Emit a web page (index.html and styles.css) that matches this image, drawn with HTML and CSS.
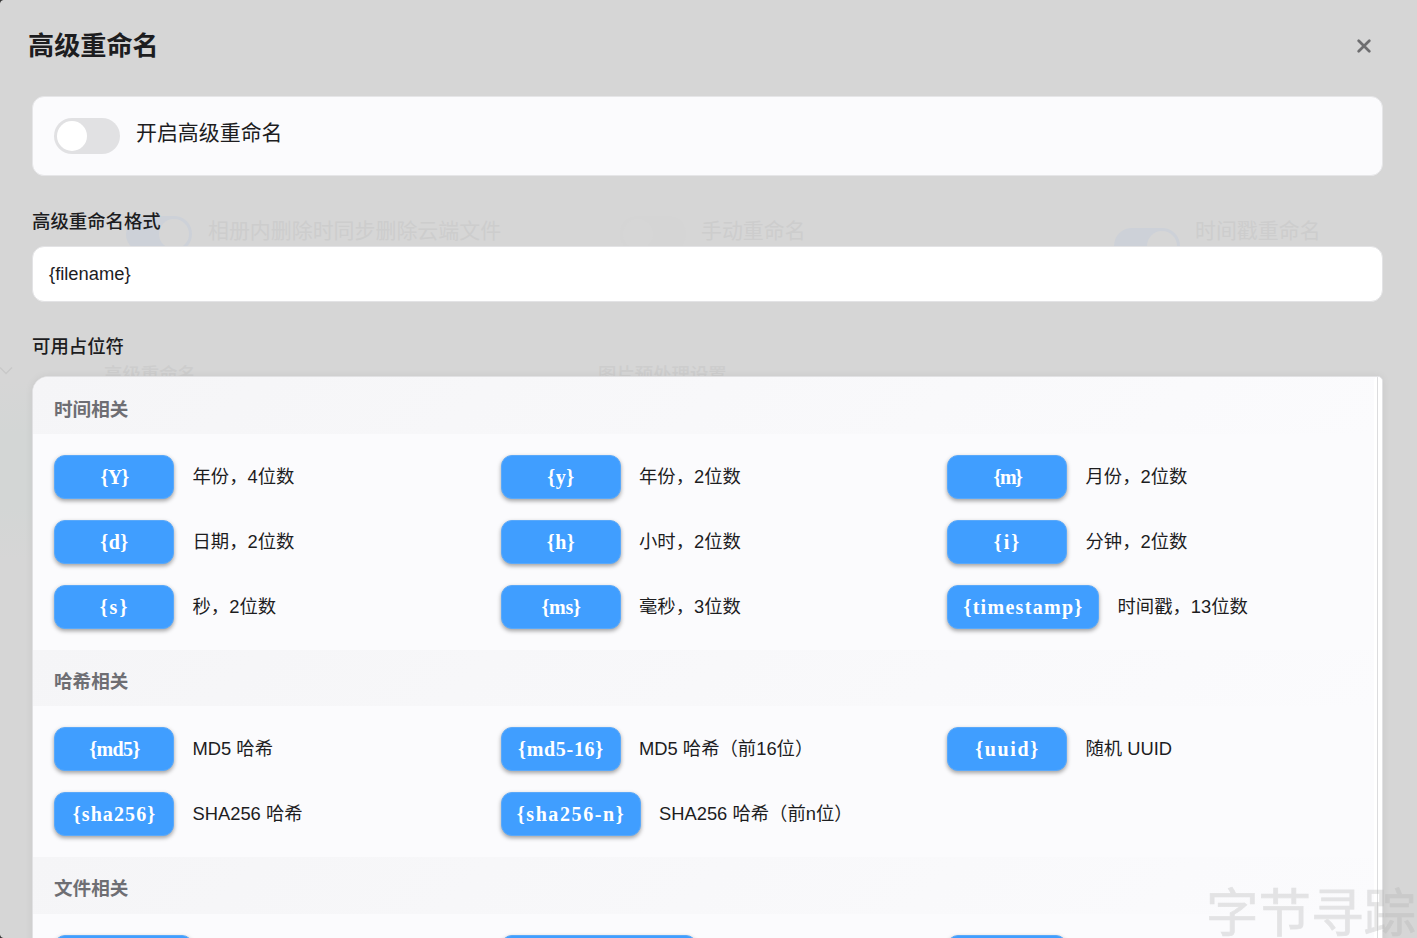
FILE: index.html
```
<!DOCTYPE html>
<html lang="zh-CN">
<head>
<meta charset="utf-8">
<title>高级重命名</title>
<link rel="stylesheet" href="styles.css">
</head>
<body>
<div class="behind" aria-hidden="true">
  <i class="ghost-side"></i>
  <i class="ghost-toggle on g1"></i><span class="ghost-text g2">相册内删除时同步删除云端文件</span>
  <i class="ghost-toggle g3"></i><span class="ghost-text g4">手动重命名</span>
  <i class="ghost-toggle on g5"></i><span class="ghost-text g6">时间戳重命名</span>
  <span class="ghost-text small g7">高级重命名</span>
  <span class="ghost-text small g8">图片预处理设置</span>
  <svg class="ghost-chevron" width="16" height="10" viewBox="0 0 16 10"><path d="M1 1.5 7 7.500 13 1.500"/></svg>
</div>
<main class="dialog">
  <header class="dialog-head">
    <h1>高级重命名</h1>
    <button class="close" aria-label="关闭"><svg width="14" height="14" viewBox="0 0 14 14"><path d="M1.700 1.700 12.300 12.300M12.300 1.700 1.700 12.300"/></svg></button>
  </header>
  <section class="switch-card"><span class="toggle"></span><span class="switch-label">开启高级重命名</span></section>
  <label class="field-label">高级重命名格式</label>
  <div class="input">{filename}</div>
  <div class="field-label second">可用占位符</div>
  <section class="panel">
    <div class="list">
      <h2 class="first">时间相关</h2>
      <div class="grid">
        <div class="item"><code class="tag sy">{Y}</code><span>年份，4位数</span></div>
        <div class="item"><code class="tag s3">{y}</code><span>年份，2位数</span></div>
        <div class="item"><code class="tag sm">{m}</code><span>月份，2位数</span></div>
        <div class="item"><code class="tag s3">{d}</code><span>日期，2位数</span></div>
        <div class="item"><code class="tag s3">{h}</code><span>小时，2位数</span></div>
        <div class="item"><code class="tag si">{i}</code><span>分钟，2位数</span></div>
        <div class="item"><code class="tag si">{s}</code><span>秒，2位数</span></div>
        <div class="item"><code class="tag sms">{ms}</code><span>毫秒，3位数</span></div>
        <div class="item"><code class="tag sts">{timestamp}</code><span>时间戳，13位数</span></div>
      </div>
      <h2>哈希相关</h2>
      <div class="grid">
        <div class="item"><code class="tag smd">{md5}</code><span>MD5 哈希</span></div>
        <div class="item"><code class="tag smd16">{md5-16}</code><span>MD5 哈希（前16位）</span></div>
        <div class="item"><code class="tag suu">{uuid}</code><span>随机 UUID</span></div>
        <div class="item"><code class="tag ssha">{sha256}</code><span>SHA256 哈希</span></div>
        <div class="item"><code class="tag sshan">{sha256-n}</code><span>SHA256 哈希（前n位）</span></div>
      </div>
      <h2 class="tall">文件相关</h2>
      <div class="grid">
        <div class="item"><code class="tag w1"></code></div>
        <div class="item"><code class="tag w2"></code></div>
        <div class="item"><code class="tag"></code></div>
      </div>
    </div>
    <div class="scrollbar"></div>
  </section>
</main>
<div class="watermark">字节寻踪</div>
</body>
</html>
```
FILE: styles.css
```
* { box-sizing: border-box; }
html, body { height: 100%; }
body {
  margin: 0;
  position: relative;
  overflow: hidden;
  background: #d6d6d6;
  color: #1d1d1f;
  font-family: "Liberation Sans", "Noto Sans CJK SC", sans-serif;
  font-size: 18.350px;
}
body::before, body::after {
  content: "";
  position: absolute;
  left: 0;
  width: 4px;
  height: 4px;
}
body::before { top: 0; background: radial-gradient(circle at 4px 4px, transparent 3.5px, #333 4.5px); }
body::after { bottom: 0; background: radial-gradient(circle at 4px 0, transparent 3.5px, #333 4.5px); }

.behind { position: absolute; inset: 0; overflow: hidden; }
.ghost-text { position: absolute; font-size: 20.950px; line-height: 30px; color: #cdcdcd; white-space: nowrap; }
.ghost-text.small { font-size: 18.400px; font-weight: 500; }
.ghost-side { position: absolute; left: 0; top: 380px; width: 32px; height: 180px; background: linear-gradient(#d6d6d6, #d3d6d5 30%, #d3d6d5 70%, #d6d6d6); }
.ghost-toggle { position: absolute; width: 66px; height: 36px; border-radius: 18px; background: #d5d5d5; }
.ghost-toggle::after { content: ""; position: absolute; left: 3px; top: 3px; width: 30px; height: 30px; border-radius: 50%; background: #d6d6d6; }
.ghost-toggle.on { background: #cdd1d8; }
.ghost-toggle.on::after { left: 33px; }
.g1 { left: 126px; top: 216px; }
.g2 { left: 208px; top: 216px; }
.g3 { left: 620px; top: 216px; }
.g4 { left: 701px; top: 216px; }
.g5 { left: 1114px; top: 228px; }
.g6 { left: 1195px; top: 216px; }
.g7 { left: 104px; top: 360px; }
.g8 { left: 598px; top: 360px; }
.ghost-chevron { position: absolute; left: -1px; top: 366px; fill: none; stroke: #c9c9c9; stroke-width: 1.500; }

.dialog { position: relative; height: 938px; padding: 0 34.500px 0 32px; overflow: hidden; display: flex; flex-direction: column; }
.dialog-head { display: flex; flex: none; justify-content: space-between; align-items: center; height: 96px; padding: 0 12px 4px 0; margin-left: -4px; }
h1 { margin: 0; font-size: 26.150px; line-height: 36px; font-weight: 700; }
.close { display: flex; padding: 0; border: 0; background: none; }
.close svg { fill: none; stroke: #6e6e70; stroke-width: 2.700; stroke-linecap: round; }

.switch-card { flex: none; display: flex; align-items: center; gap: 16px; height: 80px; padding: 0 21px; border: 1px solid #e6e6e8; border-radius: 12px; background: #fbfbfd; }
.toggle { width: 66px; height: 36px; padding: 3px; border-radius: 18px; background: #e1e1e3; }
.toggle::after { content: ""; display: block; width: 30px; height: 30px; border-radius: 50%; background: #fff; }
.switch-label { font-size: 20.950px; line-height: 30px; padding-bottom: 6px; }
.field-label { flex: none; display: block; margin-top: 32px; height: 38px; line-height: 27px; font-size: 18.400px; font-weight: 500; }
.input { flex: none; height: 56px; padding: 0 16px; border: 1px solid #e3e3e5; border-radius: 12px; background: #fff; line-height: 54px; }
.field-label.second { margin-top: 31px; height: 43px; }

.panel { flex: none; display: flex; height: 640px; border: 1px solid #e1e1e3; border-radius: 16px 5px 0 0; background: #fbfbfd; overflow: hidden; box-shadow: 0 0 8px rgba(0, 0, 0, .06); }
.list { flex: 1; margin-right: -5px; }
.scrollbar { width: 8px; border-radius: 4px; position: relative; background: linear-gradient(90deg, #fff 3px, #dcdcde 3px, #dcdcde 4px, #fff 4px); }
h2 { margin: 0; height: 56px; padding: 0 21px; line-height: 63px; font-size: 18.600px; font-weight: 700; color: #6e6e73; background: linear-gradient(135deg, #f5f5f7, #fbfbfd); }
h2.first { height: 57px; line-height: 65px; }
h2.tall { height: 57px; }
.grid { display: grid; grid-template-columns: repeat(3, 427.500px); gap: 21px 19px; padding: 21px 0 21px 21px; }
.item { display: flex; align-items: center; gap: 18.500px; height: 44px; white-space: nowrap; }
.item span { line-height: 27px; padding-bottom: 1px; }
.tag { flex: none; min-width: 120px; height: 44px; border: 1px solid #5aa9fa; border-radius: 11px; background: #409eff; color: #fff; text-align: center; text-indent: 1px; font: 700 20px/43px "Liberation Serif", serif; box-shadow: 0 2px 4px rgba(0, 0, 0, .36); }
.sy { letter-spacing: -.800px; }
.s3 { letter-spacing: .600px; }
.sm { letter-spacing: -1.500px; }
.si { letter-spacing: 2px; }
.sms { letter-spacing: -.300px; }
.sts { width: 152px; letter-spacing: 1.300px; }
.smd { letter-spacing: -.600px; }
.smd16 { letter-spacing: .700px; }
.suu { letter-spacing: 1.600px; }
.ssha { letter-spacing: 1.100px; }
.sshan { width: 140px; letter-spacing: 1.600px; }
.w1 { width: 139px; }
.w2 { width: 196px; }

.watermark { position: absolute; left: 1206px; top: 889px; height: 49px; font-size: 52.500px; line-height: 49px; white-space: nowrap; color: #b4b4b4; -webkit-text-stroke: .7px #b4b4b4; opacity: .32; }
```
